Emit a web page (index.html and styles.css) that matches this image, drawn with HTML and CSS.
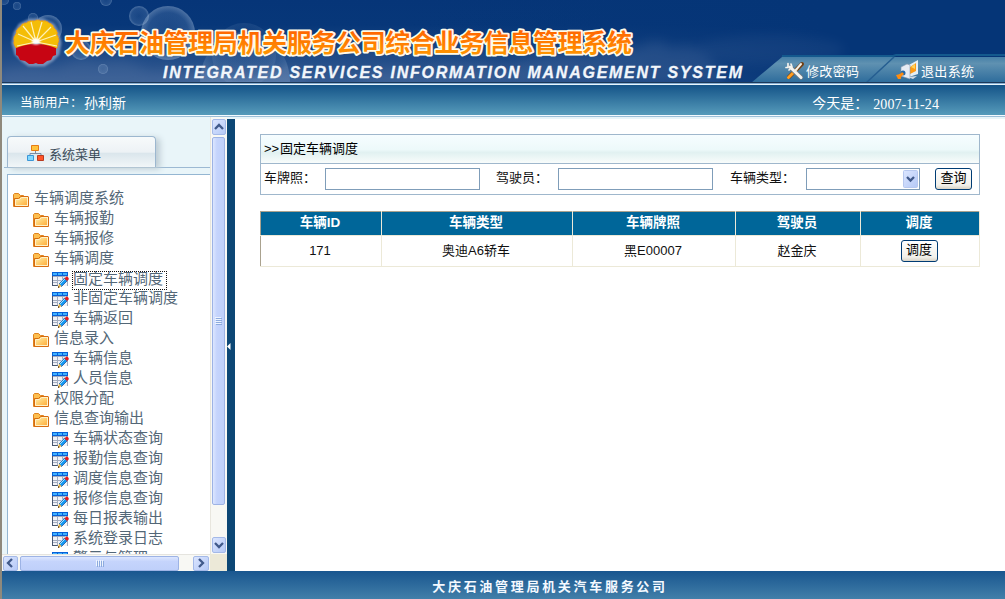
FILE: index.html
```html
<!DOCTYPE html>
<html lang="zh-CN">
<head>
<meta charset="utf-8">
<title>大庆石油管理局机关服务公司综合业务信息管理系统</title>
<link rel="stylesheet" href="styles.css">
</head>
<body>
<svg class="defs" width="0" height="0" aria-hidden="true">
  <defs>
    <linearGradient id="fold" x1="0" y1="0" x2="1" y2="1"><stop offset="0" stop-color="#fff0a8"/><stop offset="1" stop-color="#ffac38"/></linearGradient>
    <linearGradient id="btn" x1="0" y1="0" x2="1" y2="1"><stop offset="0" stop-color="#dce6ff"/><stop offset="1" stop-color="#b4c8f6"/></linearGradient>
    <symbol id="folder" viewBox="0 -1 17 16">
      <path d="M.5 13.500V1.500l1-1h4l2 2h3v3M.5 13.500h3" fill="#fcb23c" stroke="#df8420"/>
      <path d="M1 1h4l2 2h3v3H3v7H1z" fill="#fdbf50"/>
      <path d="M2.500 12.500v-6h4l2-2h6v8z" fill="url(#fold)" stroke="#fff3c8"/>
      <path d="M15.500 4v9.500H1.500M1.500 13.500v-8h4l2-2h8" fill="none" stroke="#d86c10"/>
    </symbol>
    <symbol id="sheet" viewBox="0 0 17 16">
      <path d="M0 3h16v11H0z" fill="#a4adbf"/><path d="M0 3h1v11H0zM0 13h9v1H0z" fill="#48566e"/>
      <path d="M1 5h4v3H1zM6 5h4v3H6zM11 5h4v3h-4zM1 9h4v1H1zM1 11h4v2H1zM6 9h4v4H6zM11 9h4v5h-4z" fill="#f1f2f8"/>
      <path d="M0 0h16v4H0z" fill="#0860d8"/><path d="M1 1h4v2H1zM6 1h4v2H6zM11 1h4v2h-4z" fill="#3fb2ff"/>
      <path d="M6 15.500l.7-4L13 4.800l3.300 2.800-6.400 6.600z" fill="#fff" stroke="#fff" stroke-width="1"/>
      <path d="M7 12l5.500-6 3 2.500-6 6z" fill="#1598f2" stroke="#1454a2" stroke-width=".8"/><path d="M8 12l5-5" stroke="#a2e3ff"/>
      <path d="M12.500 6.500l1.500-1.700h1.400l1.300 1.200v1.400L15 9z" fill="#e51d20"/><path d="M6 15.800l1-4 2.600 2.300z" fill="#f4be48"/><path d="M6 16v-2l1.900 1.300z" fill="#593408"/>
    </symbol>
  </defs>
</svg>
<div class="page">
  <header class="banner">
    <svg width="1003" height="85" viewBox="2 0 1003 85">
      <defs>
        <linearGradient id="sky" x1="0" y1="0" x2="0" y2="1"><stop offset="0" stop-color="#063578"/><stop offset=".3" stop-color="#073779"/><stop offset="1" stop-color="#345b92"/></linearGradient>
        <linearGradient id="right" x1="0" y1="0" x2="1" y2="0"><stop offset=".4" stop-color="#053577" stop-opacity="0"/><stop offset=".82" stop-color="#053577"/></linearGradient>
        <linearGradient id="tab" x1="0" y1="0" x2="0" y2="1"><stop offset="0" stop-color="#4780a8"/><stop offset=".25" stop-color="#5f91b1"/><stop offset="1" stop-color="#2c6b9b"/></linearGradient>
        <linearGradient id="orange" x1="0" y1="0" x2="0" y2="1"><stop offset="0" stop-color="#ff5500"/><stop offset="1" stop-color="#ff9d00"/></linearGradient>
        <radialGradient id="bubble"><stop offset="0" stop-color="#9ab8dc" stop-opacity=".12"/><stop offset=".75" stop-color="#94b4da" stop-opacity=".2"/><stop offset="1" stop-color="#b5cbe5" stop-opacity=".4"/></radialGradient>
        <filter id="soft" x="-20%" y="-50%" width="140%" height="200%"><feGaussianBlur stdDeviation="6"/></filter>
        <filter id="glow" x="-20%" y="-20%" width="140%" height="140%"><feGaussianBlur stdDeviation="1.200"/></filter>
      </defs>
      <rect x="2" width="1003" height="83" fill="url(#sky)"/>
      <rect x="2" width="1003" height="83" fill="url(#right)"/>
      <g fill="#6b84ad" opacity=".22" filter="url(#soft)">
        <path d="M0 90V70q35-8 55-1 25-16 45-6 24-8 48 8h160v19zM350 83q35-20 70-9 35-18 85-6 50-20 80-12 24-8 55-9 16-12 32 1 20-8 36 9l20 26z"/>
        <ellipse cx="770" cy="50" rx="75" ry="15" opacity=".5"/>
      </g>
      <g fill="url(#bubble)">
        <circle cx="4" cy="0" r="5"/><circle cx="17" cy="6" r="4"/><circle cx="106" cy="0" r="6"/><circle cx="48" cy="29" r="14"/><circle cx="33" cy="18" r="5"/>
        <circle cx="139" cy="16" r="10"/><circle cx="168" cy="33" r="27"/><circle cx="81" cy="50" r="10"/><circle cx="103" cy="69" r="5"/>
        <path d="M200 82a45 50 0 0 1 90 0z" opacity=".5"/><circle cx="244" cy="55" r="32" opacity=".25"/>
      </g>
      <path d="M751 83l31-26h113l-28 26z" fill="url(#tab)"/>
      <path d="M866 83l28-26h111v26z" fill="url(#tab)"/>
      <path d="M782 56h111l3-1h109" fill="none" stroke="#14598e" stroke-width="2"/>
      <path d="M894 57l-28 26" stroke="#255e91" stroke-width="1.500"/>
      <path class="seal-glow" d="M13 43l2-10 5-8 10-5h13l10 5 5 8 2 10-2 11-6 6-8 5H29l-7-5-6-6z" filter="url(#glow)"/>
      <path d="M36.500 42L17 49q-4-4-3-8-1-4 2-7 0-5 4-7 2-4 6-4 4-3 8-2 4-2 7 0 5-1 8 2 4 1 5 5 4 3 3 7 3 4 1 8 0 4-2 6z" fill="#f4bd07" stroke="#f89012" stroke-dasharray="2 1"/>
      <path d="M36 42L17 46M36 42L18 34M36 42L23 26M36 42L31 22M36 42L42 22M36 42L51 27M36 42L56 35M36 42L57 46" stroke="#fff1b7" stroke-width="1.200"/>
      <path d="M16 48q20-8 40 0v7l-3 1-2 4-4 1-4 3h-5l-2-1-3 1h-4l-4-3-5-1-2-4-2-1z" fill="#c70513"/>
      <ellipse cx="36" cy="41.500" rx="4" ry="3" fill="#fff" filter="url(#glow)"/>
      <text class="title title-glow" x="65" y="51.500" textLength="567">大庆石油管理局机关服务公司综合业务信息管理系统</text>
      <text class="title" x="65" y="51.500" textLength="567">大庆石油管理局机关服务公司综合业务信息管理系统</text>
      <text class="subtitle" x="163" y="78" textLength="579">INTEGRATED SERVICES INFORMATION MANAGEMENT SYSTEM</text>
      <g fill="none" stroke-linecap="round">
        <path d="M802 64L789 77" stroke="#713f13" stroke-width="4"/><path d="M796 70L788.500 77.500" stroke="#ff9e22" stroke-width="3"/>
        <path d="M790 67L801 77.500" stroke="#6f7b87" stroke-width="4.500"/><path d="M790 67L801 77.500" stroke="#f4f4ef" stroke-width="3"/>
        <path d="M788 63.500v4h-2M791 64l1 3-3 3" stroke="#f4f4ef" stroke-width="1.700"/><path d="M795 71l6-7" stroke="#f3eee4" stroke-width="2"/>
      </g>
      <path d="M907 66l11-6v14l-9 3z" fill="#e5eef4"/><path d="M910 67l6-4v8l-6 3z" fill="#ff9b15"/><path d="M911 67l4-3v5z" fill="#ffd25b"/>
      <path d="M901 67l6-3 3 1v14l-9-3z" fill="#e7ecf4" stroke="#8497af" stroke-width=".6"/><circle cx="903" cy="73" r="2.500" fill="#2367aa"/><path d="M896 75q5-1 6-3l2 2q-4 3-3 5h-3z" fill="#ff8c0f"/><path d="M908 77l5 2 4-3z" fill="#d6dce4"/>
      <text class="tab-text" x="806" y="76" textLength="53">修改密码</text>
      <text class="tab-text" x="921" y="76" textLength="53">退出系统</text>
      <path d="M2 82.500h1003" stroke="#1b3859"/><path d="M2 83.500h1003" stroke="#86acd0"/><path d="M2 84.500h1003" stroke="#e8f5fc"/>
    </svg>
  </header>
  <div class="userbar"><div class="user"><span>当前用户：</span><span class="name">孙利新</span></div><div class="today"><span>今天是：</span><b>2007-11-24</b></div></div>
  <div class="workspace">
    <aside class="sidebar">
      <div class="side-content">
        <div class="menu-head"><div class="menu-tab">
          <svg width="17" height="16" viewBox="0 0 17 16"><path d="M8.500 6v3M3 11V8.500h11V11" fill="none" stroke="#7c8ba0"/><path d="M4.500.5h7v5h-7z" fill="#ffc33c" stroke="#e67b15"/><path d="M.5 10.500h6v5h-6z" fill="#82d8ff" stroke="#3b96d7"/><path d="M10.500 10.500h6v5h-6z" fill="#ff5428" stroke="#b83a20"/></svg><span>系统菜单</span></div></div>
        <div class="tree">
          <div class="node"><svg><use href="#folder"/></svg><span>车辆调度系统</span></div>
          <div class="node l1"><svg><use href="#folder"/></svg><span>车辆报勤</span></div>
          <div class="node l1"><svg><use href="#folder"/></svg><span>车辆报修</span></div>
          <div class="node l1"><svg><use href="#folder"/></svg><span>车辆调度</span></div>
          <div class="node l2"><svg><use href="#sheet"/></svg><span class="focus">固定车辆调度</span></div>
          <div class="node l2"><svg><use href="#sheet"/></svg><span>非固定车辆调度</span></div>
          <div class="node l2"><svg><use href="#sheet"/></svg><span>车辆返回</span></div>
          <div class="node l1"><svg><use href="#folder"/></svg><span>信息录入</span></div>
          <div class="node l2"><svg><use href="#sheet"/></svg><span>车辆信息</span></div>
          <div class="node l2"><svg><use href="#sheet"/></svg><span>人员信息</span></div>
          <div class="node l1"><svg><use href="#folder"/></svg><span>权限分配</span></div>
          <div class="node l1"><svg><use href="#folder"/></svg><span>信息查询输出</span></div>
          <div class="node l2"><svg><use href="#sheet"/></svg><span>车辆状态查询</span></div>
          <div class="node l2"><svg><use href="#sheet"/></svg><span>报勤信息查询</span></div>
          <div class="node l2"><svg><use href="#sheet"/></svg><span>调度信息查询</span></div>
          <div class="node l2"><svg><use href="#sheet"/></svg><span>报修信息查询</span></div>
          <div class="node l2"><svg><use href="#sheet"/></svg><span>每日报表输出</span></div>
          <div class="node l2"><svg><use href="#sheet"/></svg><span>系统登录日志</span></div>
          <div class="node l2"><svg><use href="#sheet"/></svg><span>警示与管理</span></div>
        </div>
      </div>
      <div class="vscroll">
        <svg class="sbtn" width="14" height="16" viewBox="0 0 14 16"><rect x=".5" y=".5" width="13" height="15" rx="1.500" fill="url(#btn)" stroke="#a4b9e8"/><path d="M3 10l4-4 4 4" fill="none" stroke="#40598a" stroke-width="2.300"/></svg>
        <div class="vthumb"><svg width="7" height="8"><path d="M0 .5h6M0 2.500h6M0 4.500h6M0 6.500h6" stroke="#eef4fe"/><path d="M1 1.500h6M1 3.500h6M1 5.500h6M1 7.500h6" stroke="#8caade"/></svg></div>
        <svg class="sbtn" width="14" height="16" viewBox="0 0 14 16"><rect x=".5" y=".5" width="13" height="15" rx="1.500" fill="url(#btn)" stroke="#a4b9e8"/><path d="M3 6l4 4 4-4" fill="none" stroke="#40598a" stroke-width="2.300"/></svg>
      </div>
      <div class="hscroll">
        <svg width="15" height="15" viewBox="0 0 15 15"><rect x=".5" y=".5" width="14" height="14" rx="1.500" fill="url(#btn)" stroke="#a4b9e8"/><path d="M9 3L5 7l4 4" fill="none" stroke="#40598a" stroke-width="2.300"/></svg>
        <div class="hthumb"><svg width="8" height="7"><path d="M.5 0v6M2.500 0v6M4.500 0v6M6.500 0v6" stroke="#eef4fe"/><path d="M1.500 1v6M3.500 1v6M5.500 1v6M7.500 1v6" stroke="#8caade"/></svg></div>
        <svg class="push" width="16" height="15" viewBox="0 0 16 15"><rect x=".5" y=".5" width="15" height="14" rx="1.500" fill="url(#btn)" stroke="#a4b9e8"/><path d="M6 3l4 4-4 4" fill="none" stroke="#40598a" stroke-width="2.300"/></svg>
      </div>
      <div class="corner"></div>
    </aside>
    <div class="splitter"><svg width="4" height="7"><path d="M3.500 0v7L0 3.500z" fill="#fff"/></svg></div>
    <main>
      <section class="search">
        <h1><i>&gt;&gt;</i>固定车辆调度</h1>
        <div class="filters">
          <label class="plate">车牌照：</label><input type="text" class="field">
          <label class="driver">驾驶员：</label><input type="text" class="field">
          <label class="type">车辆类型：</label>
          <div class="select"><svg width="15" height="18" viewBox="0 0 15 18"><rect x=".5" y=".5" width="14" height="17" rx="1" fill="url(#btn)" stroke="#b7c8ef"/><path d="M4 7l3.500 3.500L11 7" fill="none" stroke="#40598a" stroke-width="2.300"/></svg></div>
          <button class="btn query">查询</button>
        </div>
      </section>
      <table>
        <colgroup><col class="c1"><col class="c2"><col class="c3"><col class="c4"><col class="c5"></colgroup>
        <thead><tr><th>车辆ID</th><th>车辆类型</th><th>车辆牌照</th><th>驾驶员</th><th>调度</th></tr></thead>
        <tbody><tr><td>171</td><td>奥迪A6轿车</td><td>黑E00007</td><td>赵金庆</td><td><button class="btn">调度</button></td></tr></tbody>
      </table>
    </main>
  </div>
  <footer>大庆石油管理局机关汽车服务公司</footer>
</div>
</body>
</html>
```

FILE: styles.css
```css
* { box-sizing: border-box; }
body { margin: 0; overflow: hidden; font: 13px "Liberation Sans", "Noto Sans CJK SC", sans-serif; color: #111; }
.defs { position: absolute; }
.page { width: 1005px; height: 599px; border-left: 2px solid #8f897c; display: flex; flex-direction: column; background: #fff; }
.banner { height: 85px; flex: none; }
.banner svg { display: block; }
.title { font: bold 25px "Noto Sans CJK SC", sans-serif; fill: url(#orange); }
.title-glow { fill: #fff; stroke: #fffbe8; stroke-width: 3.5px; stroke-linejoin: round; }
.subtitle { font: italic bold 16px "Liberation Sans", sans-serif; fill: #f2f6fb; stroke: #f2f6fb; stroke-width: .3px; }
.tab-text { font: 13px "Noto Sans CJK SC", sans-serif; fill: #fff; }
.seal-glow { fill: #8ba1c4; stroke: #8ba1c4; stroke-width: 3px; opacity: .8; }
.userbar { height: 32px; flex: none; padding: 0 66px 0 18px; display: flex; justify-content: space-between; background: linear-gradient(#145388, #5499b9 29px, #5499b9 30px, #f4fbff 30px, #f4fbff 31px, #9cbed7 31px); color: #fff; line-height: 37px; }
.user { display: flex; font-size: 12.5px; }
.user span:first-child { width: 64px; }
.user .name { font-size: 14px; }
.today { display: flex; font-size: 14px; }
.today span { width: 61px; }
.today b { font: 14px/39px "Liberation Serif", serif; letter-spacing: .1px; }
.workspace { height: 454px; flex: none; display: flex; background: linear-gradient(#e9f5f9 2px, #fff 2px); }
.sidebar { width: 225px; display: grid; grid-template: 437px 17px / 208px 17px; background: #e9f5f9; }
.side-content { overflow: hidden; height: 437px; padding-left: 2px; }
.menu-head { height: 51px; padding: 19px 0 0 3px; border-bottom: 1px solid #9cb9d3; }
.menu-tab { width: 149px; height: 31px; padding: 2px 0 0 19px; display: flex; align-items: center; gap: 5px; border: 1px solid #9cb7cf; border-bottom: 0; border-radius: 4px 4px 0 0; background: linear-gradient(#f7fafb, #edf2f5 50%, #dbe6ec 55%, #f1f6f8); box-shadow: 4px 2px 6px #bdcbd3; color: #3a4b58; font-size: 13px; }
.tree { height: 500px; margin: 6px 0 0 3px; padding: 14px 0 0 5px; border: 1px solid #94b6d2; border-right: 0; background: #fff; }
.node { height: 20px; display: flex; align-items: center; gap: 4px; color: #536777; font-size: 15px; line-height: 18px; white-space: nowrap; }
.node svg { width: 17px; height: 16px; flex: none; position: relative; top: 1px; }
.node span { height: 18px; position: relative; top: -1px; }
.l1 { padding-left: 20px; }
.l2 { padding-left: 39px; }
.node .focus { height: 17px; top: 1px; padding-right: 3px; line-height: 14px; outline: 1px dotted #111; }
.vscroll { padding: 2px 2px 1px 1px; border-left: 1px solid #e8e6de; background: #f8f8f4; display: flex; flex-direction: column; }
.sbtn { flex: none; display: block; }
.vthumb { height: 368px; margin: 2px 0 auto; border: 1px solid #9db3e5; border-radius: 2px; background: linear-gradient(90deg, #dce6ff, #c5d4fc 35%, #bfd0fa); display: flex; align-items: center; justify-content: center; }
.hscroll { height: 17px; padding: 1px; border-top: 1px solid #e5e4df; background: #f8f8f4; display: flex; }
.hscroll svg { flex: none; }
.hthumb { width: 159px; height: 15px; margin-left: 2px; border: 1px solid #9db3e5; border-radius: 2px; background: linear-gradient(#dce6ff, #c5d4fc 35%, #bfd0fa); display: flex; align-items: center; justify-content: center; }
.push { margin-left: auto; }
.corner { background: #ece9d8; }
.splitter { width: 8px; margin-top: 2px; padding-top: 3px; background: #0c4775; display: flex; align-items: center; }
main { width: 770px; padding: 17px 0 0 25px; }
.search { width: 720px; height: 61px; border: 1px solid #9fb7cc; }
h1 { height: 29px; margin: 0; padding-left: 3px; border-bottom: 1px solid #9fb7cc; background: linear-gradient(#f6fdff, #edf9fa 52%, #e1f1f1 62%, #f8fcfb); font-size: 13px; line-height: 27px; font-weight: normal; color: #000; }
h1 i { display: inline-block; width: 16px; font-style: normal; }
.filters { height: 30px; display: flex; align-items: flex-start; padding-top: 4px; }
.filters > * { flex: none; }
.filters label { height: 22px; line-height: 20px; padding-left: 3px; white-space: nowrap; }
.plate { width: 64px; }
.driver { width: 65px; margin-left: 13px; }
.type { width: 79px; margin-left: 14px; }
.field { width: 155px; height: 22px; border: 1px solid #7f9db9; padding: 0; background: #fff; }
.select { width: 114px; height: 22px; border: 1px solid #7f9db9; padding: 1px 1px 0 0; display: flex; justify-content: flex-end; }
.btn { width: 37px; height: 22px; padding: 0 0 4px; border: 1px solid #003c74; border-radius: 3px; background: linear-gradient(#fff, #f1f0ea 80%, #d9d4c7); font: 13px/16px "Noto Sans CJK SC", sans-serif; color: #000; white-space: nowrap; }
.query { margin-left: 15px; }
table { width: 720px; height: 56px; margin-top: 16px; table-layout: fixed; border-collapse: collapse; border: 1px solid #ece9d8; border-left-color: #aaa28f; border-top-color: #aaa28f; }
.c1 { width: 121px; }
.c2 { width: 191px; }
.c3 { width: 163px; }
.c4 { width: 125px; }
.c5 { width: 119px; }
th, td { padding: 0 2px 0 0; text-align: center; border-right: 1px solid #ece9d8; }
th { height: 24px; background: #069; color: #fff; font-size: 13.5px; line-height: 20px; padding-bottom: 2px; }
td { height: 31px; border-top: 1px solid #ece9d8; line-height: 20px; }
td .btn { display: block; margin: -1px auto 0; }
footer { height: 28px; background: linear-gradient(#19568f, #427fa9); color: #f4f9ff; text-align: center; font: bold 13px/30px "Noto Sans CJK SC", sans-serif; letter-spacing: 2.700px; padding-left: 93px; }
```
